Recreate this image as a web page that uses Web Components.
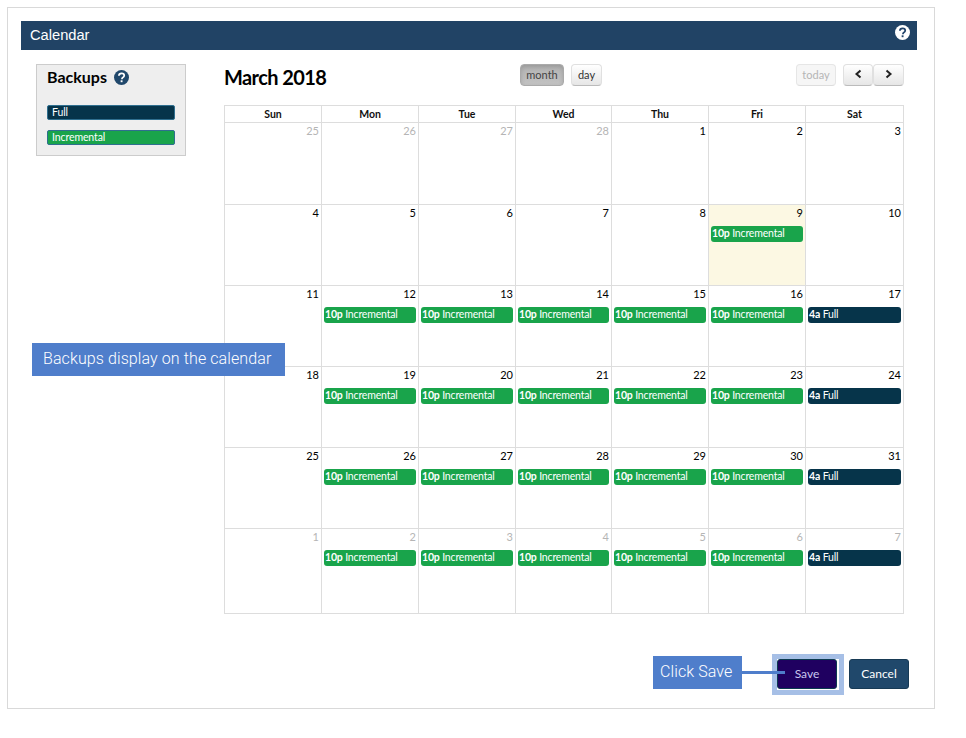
<!DOCTYPE html>
<html><head><meta charset="utf-8"><title>Calendar</title>
<style>html,body{margin:0;padding:0;background:#fff}body{font-family:Lato,sans-serif;width:966px;height:738px;overflow:hidden}</style>
</head><body>
<app-page></app-page>
<script>
const help=(fg,bg,s)=>`<svg width="${s}" height="${s}" viewBox="0 0 16 16" style="display:block"><circle cx="8" cy="8" r="8" fill="${bg}"/><path d="M5.2 6.2C5.3 4.5 6.5 3.6 8.1 3.6c1.6 0 2.8.9 2.8 2.3 0 1.2-.7 1.7-1.5 2.2-.7.4-.9.7-.9 1.4v.3" fill="none" stroke="${fg}" stroke-width="1.9"/><rect x="7.1" y="11" width="2" height="2" fill="${fg}"/></svg>`;
class BackupEvent extends HTMLElement{
 constructor(){super();const full=this.hasAttribute('full');
 this.attachShadow({mode:'open'}).innerHTML=`<style>:host{display:block;height:16px;margin:0 2px 0 2px;border-radius:3px;background:${full?'#06344a':'#19a44b'};color:#fff;font:10.5px/14px Lato,sans-serif;letter-spacing:-.17px;padding-left:1px;white-space:nowrap;overflow:hidden}b{font-weight:700}</style><b>${this.getAttribute('t')}</b> <slot></slot>`}}
customElements.define('backup-event',BackupEvent);
class CalCell extends HTMLElement{
 constructor(){super();const a=n=>this.getAttribute(n);
 this.attachShadow({mode:'open'}).innerHTML=`<style>:host{display:block;box-sizing:border-box;border-right:1px solid #ddd;border-bottom:1px solid #ddd;background:${this.hasAttribute('today')?'#fcf8e3':'#fff'}}
 .n{font:11px/14px Lato,sans-serif;text-align:right;padding:1px 2px 0 0;height:18px;box-sizing:border-box;color:${this.hasAttribute('dim')?'#b5b5b5':'#000'}}
 .e{margin-top:3px}</style><div class="n">${a('d')}</div><div class="e"><slot></slot></div>`}}
customElements.define('cal-cell',CalCell);
class FcBtn extends HTMLElement{
 constructor(){super();const k=this.getAttribute('kind')||'';
 const st={on:'background:linear-gradient(#b3b3b3,#c2c2c2);color:#444;border-color:#aaa;box-shadow:inset 0 2px 4px rgba(0,0,0,.15)',off:'background:#f6f6f6;color:#b5b5b5;border-color:#e6e6e6;border-bottom-color:#ddd','':'background:linear-gradient(#fff,#e6e6e6);color:#333;border-color:#e0e0e0;border-bottom-color:#bbb'}[k];
 this.attachShadow({mode:'open'}).innerHTML=`<style>:host{display:block;box-sizing:border-box;height:22px;border:1px solid;border-radius:4px;font:11px/19px Lato,sans-serif;text-align:center;${st}}svg{display:block;margin:5px auto 0}</style><slot></slot>`}}
customElements.define('fc-btn',FcBtn);
class LegendChip extends HTMLElement{
 constructor(){super();this.attachShadow({mode:'open'}).innerHTML=`<style>:host{display:block;box-sizing:border-box;height:15px;margin-bottom:10px;border:1px solid #2f6f8f;border-radius:2px;background:${this.getAttribute('c')};color:#fff;font:10.5px/13px Lato,sans-serif;letter-spacing:-.1px;padding-left:4px}</style><slot></slot>`}}
customElements.define('legend-chip',LegendChip);
class AppSidebar extends HTMLElement{
 constructor(){super();this.attachShadow({mode:'open'}).innerHTML=`<style>:host{display:block;box-sizing:border-box;width:150px;height:92px;background:#eee;border:1px solid #ccc;padding:2px 10px 0}
 h3{margin:0 0 18px;height:20px;display:flex;align-items:center;gap:7px;font:700 16px/20px Lato,sans-serif;color:#000}</style><h3>Backups ${help('#fff','#20486b',15)}</h3><slot></slot>`}}
customElements.define('app-sidebar',AppSidebar);
class CalGrid extends HTMLElement{
 constructor(){super();
 const days=['Sun','Mon','Tue','Wed','Thu','Fri','Sat'];
 let cells='';
 const weeks=[[25,26,27,28,1,2,3],[4,5,6,7,8,9,10],[11,12,13,14,15,16,17],[18,19,20,21,22,23,24],[25,26,27,28,29,30,31],[1,2,3,4,5,6,7]];
 weeks.forEach((w,r)=>w.forEach((d,c)=>{
  const dim=(r==0&&d>20)||r==5; const today=r==1&&c==5;
  let ev='';
  if(r>=2&&c>=1&&c<=5||today) ev='<backup-event t="10p">Incremental</backup-event>';
  if(r>=2&&c==6) ev='<backup-event t="4a" full>Full</backup-event>';
  cells+=`<cal-cell d="${d}" ${dim?'dim':''} ${today?'today':''}>${ev}</cal-cell>`;
 }));
 this.attachShadow({mode:'open'}).innerHTML=`<style>:host{display:grid;box-sizing:border-box;width:680px;border:1px solid #ddd;border-width:1px 0 0 1px;grid-template-columns:97px 97px 97px 96px 97px 97px 98px;grid-template-rows:17px 82px 81px 81px 81px 81px 85px}
 .h{box-sizing:border-box;border-right:1px solid #ddd;border-bottom:1px solid #ddd;font:700 10.5px/16px Lato,sans-serif;text-align:center;color:#111}</style>${days.map(d=>`<div class="h">${d}</div>`).join('')}${cells}`}}
customElements.define('cal-grid',CalGrid);
class AppBtn extends HTMLElement{
 constructor(){super();const s=this.hasAttribute('sel');this.attachShadow({mode:'open'}).innerHTML=`<style>:host{display:block;box-sizing:border-box;width:60px;height:30px;border:1px solid ${s?'#0c3a50':'#173a55'};border-radius:3px;background:${s?'#1f0060':'#20486b'};color:${s?'#c9c6ee':'#fff'};font:12px/28px Lato,sans-serif;text-align:center}</style><slot></slot>`}}
customElements.define('app-btn',AppBtn);
class AppPage extends HTMLElement{
 constructor(){super();
 const sv=(d)=>`<svg width="9" height="10" viewBox="0 0 9 10"><path d="${d}" fill="none" stroke="#222" stroke-width="2"/></svg>`;
 this.attachShadow({mode:'open'}).innerHTML=`<style>
 :host{display:block;position:relative;box-sizing:border-box;width:928px;height:702px;margin:7px 0 0 7px;border:1px solid #d9d9d9;padding:13px 17px 0 13px}
 .bar{height:29px;background:#214365;color:#fff;font:14.67px/28px "Liberation Sans",sans-serif;padding:0 9px;display:flex;justify-content:space-between}
 .bar span.i{margin:4px -2px 0 0}
 .main{display:flex;margin-top:14px;padding-left:15px}
 .right{margin-left:38px;width:680px}
 .tools{height:41px;display:flex;position:relative;align-items:flex-start}
 h2{margin:0;font:700 20px/27px Lato,sans-serif;letter-spacing:-.6px;color:#000;width:296px}
 .views{display:flex;gap:7px;width:276px;margin-left:0}
 .views fc-btn:first-child{width:44px;margin-left:0}.views fc-btn:last-child{width:31px}
 .nav{display:flex}
 .today{width:40px;margin-right:7px}.pv{width:30px}.nx{width:31px}
 .foot{position:absolute;right:25px;bottom:19px;display:flex;gap:12px}
 .call{position:absolute;box-sizing:border-box;background:#4f7ecb;color:#fff;font:300 16px/32px Roboto,sans-serif;letter-spacing:.1px}
 .c1{left:24px;top:335px;width:253px;height:33px;padding-left:11px}
 .c2{left:645px;top:648px;width:89px;height:33px;padding-left:7px}
 .ln{position:absolute;left:734px;top:663px;width:43px;height:3px;background:#4f7ecb}
 .hl{position:absolute;left:764px;top:646px;width:72px;height:41px;box-sizing:border-box;border:5px solid #a6bfe6}
 </style>
 <div class="bar"><span>Calendar</span><span class="i">${help('#20436a','#fff',15)}</span></div>
 <div class="main"><app-sidebar><legend-chip c="#06344a">Full</legend-chip><legend-chip c="#19a44b">Incremental</legend-chip></app-sidebar>
 <div class="right"><div class="tools"><h2>March 2018</h2><div class="views"><fc-btn kind="on">month</fc-btn><fc-btn>day</fc-btn></div>
 <div class="nav"><fc-btn kind="off" class="today">today</fc-btn><fc-btn class="pv">${sv('M6.5 1.5 L2.5 5 L6.5 8.5')}</fc-btn><fc-btn class="nx">${sv('M2.5 1.5 L6.5 5 L2.5 8.5')}</fc-btn></div></div>
 <cal-grid></cal-grid></div></div>
 <div class="foot"><app-btn sel>Save</app-btn><app-btn>Cancel</app-btn></div>
 <div class="hl"></div><div class="ln"></div>
 <div class="call c1">Backups display on the calendar</div><div class="call c2">Click Save</div>`}}
customElements.define('app-page',AppPage);
</script></body></html>
